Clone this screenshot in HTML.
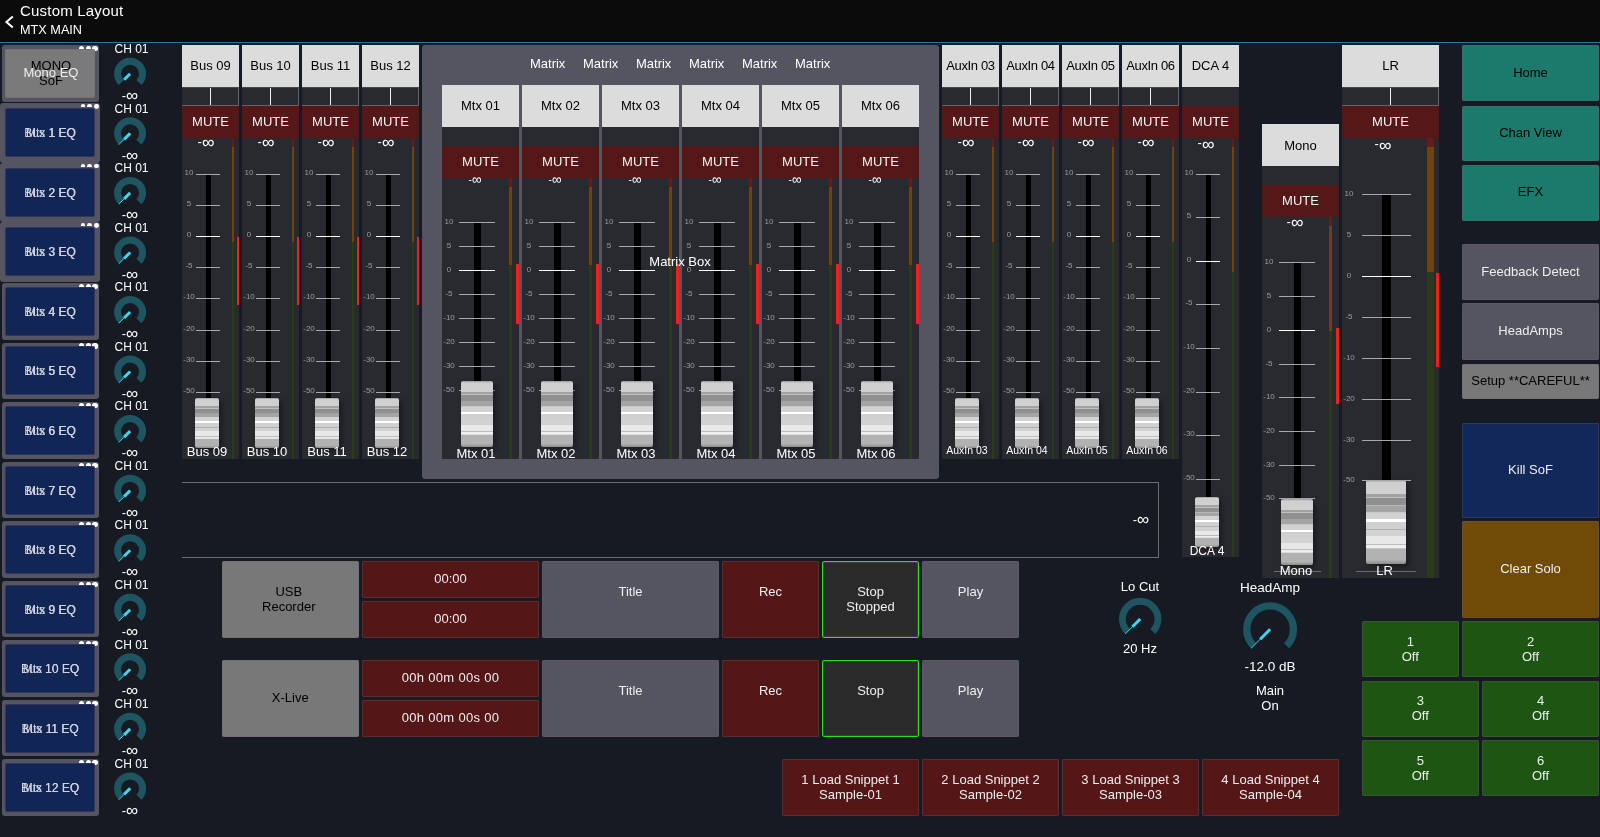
<!DOCTYPE html><html><head><meta charset="utf-8"><title>Custom Layout</title><style>
*{box-sizing:border-box;margin:0;padding:0}
html,body{width:1600px;height:837px;overflow:hidden;background:#161a23;}
body{position:relative;font-family:"Liberation Sans",sans-serif;font-size:13px;color:#fff;}
#w{position:absolute;left:0;top:0;width:1600px;height:837px;will-change:transform;}
.a{position:absolute;}
.c{position:absolute;display:flex;align-items:center;justify-content:center;text-align:center;white-space:nowrap;line-height:15px;padding-bottom:2px;}
.hdr{left:0;top:0;width:1600px;height:44px;background:#0b0b0b;}
.hl{left:0;top:41.7px;width:1600px;height:1.5px;background:#0a8494;}
.strip{background:#282a30;}
.lab{background:#dcdcdc;color:#000;}
.mute{background:#561718;color:#f2f2f2;}
.pan{border-right:1px solid #6a6262;border-bottom:1px solid #6a6262;border-top:1px solid #4a4646;}
.panl{background:#f0f0f0;width:1px;}
.tick{height:1px;background:#a8a8a8;}
.tick0{height:1.4px;background:#fff;}
.trk{background:#000;}
.sl{font-size:8px;color:#9c9c9c;text-align:center;line-height:8px;white-space:nowrap;}
.h{border-radius:2px;box-shadow:3px 3px 5px rgba(0,0,0,.35);
background:linear-gradient(to bottom,#9a9a9a 0%,#cfcfcf 3%,#d0d0d0 16.5%,#a2a2a2 16.5%,#a2a2a2 20%,#c0c0c0 20%,#c0c0c0 21.5%,#909090 21.5%,#909090 29.7%,#b8b8b8 29.7%,#b8b8b8 31%,#a4a4a4 31%,#a4a4a4 37.5%,#d2d2d2 39%,#d2d2d2 46.5%,#fff 46.5%,#fff 50.5%,#d0d0d0 50.5%,#d0d0d0 58.5%,#b0b0b0 58.5%,#b0b0b0 59.7%,#d2d2d2 59.7%,#d2d2d2 67%,#e8e8e8 67%,#e8e8e8 76.5%,#bcbcbc 76.5%,#bcbcbc 77.7%,#eee 77.7%,#eee 80.7%,#b2b2b2 82%,#b2b2b2 95%,#8c8c8c 100%);}
.m1{background:#6b1a1a;}
.m2{background:#6e4312;}
.m3{background:#2a3a1a;}
.red{background:#f0201c;}
.btn{border-radius:2px;box-shadow:inset 0 0 0 .5px rgba(120,95,115,.6);}
.gp{background:#555562;border-radius:3px;}
</style></head><body><div id="w">
<div class="a hdr" style="left:0px;top:0px;width:1600px;height:44px;"></div>
<div class="a hl" style="left:0px;top:41.7px;width:1600px;height:1.5px;"></div>
<svg class="a" style="left:4px;top:15px" width="12" height="14" viewBox="0 0 12 14"><path d="M8.8 1.6 L2.4 7 L8.8 12.4" fill="none" stroke="#fff" stroke-width="2"/></svg>
<div class="a" style="left:20px;top:2px;font-size:15px;line-height:18px;letter-spacing:.2px;white-space:nowrap">Custom Layout</div>
<div class="a" style="left:20px;top:23px;font-size:12.7px;line-height:15px;white-space:nowrap">MTX MAIN</div>
<div class="a strip" style="left:182px;top:45px;width:57px;height:414px">
<div class="c lab" style="left:0;top:0;width:57px;height:42px;font-size:13px;letter-spacing:0px;padding-bottom:2px">Bus 09</div>
<div class="a pan" style="left:0;top:42px;width:57px;height:19px"></div>
<div class="a panl" style="left:28px;top:43px;height:17px"></div>
<div class="c mute" style="left:0;top:61px;width:57px;height:32px">MUTE</div>
<div class="c" style="left:4px;top:89.3px;width:40px;height:16px;font-size:13px">-<span style="font-size:17.55px;line-height:10px;position:relative;top:1px">&#8734;</span></div>
<div class="a m1" style="left:50px;top:93px;width:2px;height:9px"></div>
<div class="a m2" style="left:50px;top:102px;width:2px;height:95px"></div>
<div class="a m3" style="left:50px;top:197px;width:2px;height:217px"></div>
<div class="a red" style="left:55px;top:192px;width:2px;height:68px"></div>
<div class="a trk" style="left:24px;top:129px;width:5px;height:226px"></div>
<div class="a tick" style="left:14px;top:129px;width:24px"></div>
<div class="a sl" style="left:-3px;top:124px;width:20px">10</div>
<div class="a tick" style="left:14px;top:160px;width:24px"></div>
<div class="a sl" style="left:-3px;top:155px;width:20px">5</div>
<div class="a tick0" style="left:14px;top:190.8px;width:24px"></div>
<div class="a sl" style="left:-3px;top:186px;width:20px">0</div>
<div class="a tick" style="left:14px;top:222px;width:24px"></div>
<div class="a sl" style="left:-3px;top:217px;width:20px">-5</div>
<div class="a tick" style="left:14px;top:253px;width:24px"></div>
<div class="a sl" style="left:-3px;top:248px;width:20px">-10</div>
<div class="a tick" style="left:14px;top:285px;width:24px"></div>
<div class="a sl" style="left:-3px;top:280px;width:20px">-20</div>
<div class="a tick" style="left:14px;top:316px;width:24px"></div>
<div class="a sl" style="left:-3px;top:311px;width:20px">-30</div>
<div class="a tick" style="left:14px;top:347px;width:24px"></div>
<div class="a sl" style="left:-3px;top:342px;width:20px">-50</div>
<div class="a h" style="left:13px;top:353px;width:24px;height:50px"></div>
<div class="c" style="left:-15px;top:399px;width:80px;height:16px;font-size:13px">Bus 09</div>
</div>
<div class="a strip" style="left:242px;top:45px;width:57px;height:414px">
<div class="c lab" style="left:0;top:0;width:57px;height:42px;font-size:13px;letter-spacing:0px;padding-bottom:2px">Bus 10</div>
<div class="a pan" style="left:0;top:42px;width:57px;height:19px"></div>
<div class="a panl" style="left:28px;top:43px;height:17px"></div>
<div class="c mute" style="left:0;top:61px;width:57px;height:32px">MUTE</div>
<div class="c" style="left:4px;top:89.3px;width:40px;height:16px;font-size:13px">-<span style="font-size:17.55px;line-height:10px;position:relative;top:1px">&#8734;</span></div>
<div class="a m1" style="left:50px;top:93px;width:2px;height:9px"></div>
<div class="a m2" style="left:50px;top:102px;width:2px;height:95px"></div>
<div class="a m3" style="left:50px;top:197px;width:2px;height:217px"></div>
<div class="a red" style="left:55px;top:192px;width:2px;height:68px"></div>
<div class="a trk" style="left:24px;top:129px;width:5px;height:226px"></div>
<div class="a tick" style="left:14px;top:129px;width:24px"></div>
<div class="a sl" style="left:-3px;top:124px;width:20px">10</div>
<div class="a tick" style="left:14px;top:160px;width:24px"></div>
<div class="a sl" style="left:-3px;top:155px;width:20px">5</div>
<div class="a tick0" style="left:14px;top:190.8px;width:24px"></div>
<div class="a sl" style="left:-3px;top:186px;width:20px">0</div>
<div class="a tick" style="left:14px;top:222px;width:24px"></div>
<div class="a sl" style="left:-3px;top:217px;width:20px">-5</div>
<div class="a tick" style="left:14px;top:253px;width:24px"></div>
<div class="a sl" style="left:-3px;top:248px;width:20px">-10</div>
<div class="a tick" style="left:14px;top:285px;width:24px"></div>
<div class="a sl" style="left:-3px;top:280px;width:20px">-20</div>
<div class="a tick" style="left:14px;top:316px;width:24px"></div>
<div class="a sl" style="left:-3px;top:311px;width:20px">-30</div>
<div class="a tick" style="left:14px;top:347px;width:24px"></div>
<div class="a sl" style="left:-3px;top:342px;width:20px">-50</div>
<div class="a h" style="left:13px;top:353px;width:24px;height:50px"></div>
<div class="c" style="left:-15px;top:399px;width:80px;height:16px;font-size:13px">Bus 10</div>
</div>
<div class="a strip" style="left:302px;top:45px;width:57px;height:414px">
<div class="c lab" style="left:0;top:0;width:57px;height:42px;font-size:13px;letter-spacing:0px;padding-bottom:2px">Bus 11</div>
<div class="a pan" style="left:0;top:42px;width:57px;height:19px"></div>
<div class="a panl" style="left:28px;top:43px;height:17px"></div>
<div class="c mute" style="left:0;top:61px;width:57px;height:32px">MUTE</div>
<div class="c" style="left:4px;top:89.3px;width:40px;height:16px;font-size:13px">-<span style="font-size:17.55px;line-height:10px;position:relative;top:1px">&#8734;</span></div>
<div class="a m1" style="left:50px;top:93px;width:2px;height:9px"></div>
<div class="a m2" style="left:50px;top:102px;width:2px;height:95px"></div>
<div class="a m3" style="left:50px;top:197px;width:2px;height:217px"></div>
<div class="a red" style="left:55px;top:192px;width:2px;height:68px"></div>
<div class="a trk" style="left:24px;top:129px;width:5px;height:226px"></div>
<div class="a tick" style="left:14px;top:129px;width:24px"></div>
<div class="a sl" style="left:-3px;top:124px;width:20px">10</div>
<div class="a tick" style="left:14px;top:160px;width:24px"></div>
<div class="a sl" style="left:-3px;top:155px;width:20px">5</div>
<div class="a tick0" style="left:14px;top:190.8px;width:24px"></div>
<div class="a sl" style="left:-3px;top:186px;width:20px">0</div>
<div class="a tick" style="left:14px;top:222px;width:24px"></div>
<div class="a sl" style="left:-3px;top:217px;width:20px">-5</div>
<div class="a tick" style="left:14px;top:253px;width:24px"></div>
<div class="a sl" style="left:-3px;top:248px;width:20px">-10</div>
<div class="a tick" style="left:14px;top:285px;width:24px"></div>
<div class="a sl" style="left:-3px;top:280px;width:20px">-20</div>
<div class="a tick" style="left:14px;top:316px;width:24px"></div>
<div class="a sl" style="left:-3px;top:311px;width:20px">-30</div>
<div class="a tick" style="left:14px;top:347px;width:24px"></div>
<div class="a sl" style="left:-3px;top:342px;width:20px">-50</div>
<div class="a h" style="left:13px;top:353px;width:24px;height:50px"></div>
<div class="c" style="left:-15px;top:399px;width:80px;height:16px;font-size:13px">Bus 11</div>
</div>
<div class="a strip" style="left:362px;top:45px;width:57px;height:414px">
<div class="c lab" style="left:0;top:0;width:57px;height:42px;font-size:13px;letter-spacing:0px;padding-bottom:2px">Bus 12</div>
<div class="a pan" style="left:0;top:42px;width:57px;height:19px"></div>
<div class="a panl" style="left:28px;top:43px;height:17px"></div>
<div class="c mute" style="left:0;top:61px;width:57px;height:32px">MUTE</div>
<div class="c" style="left:4px;top:89.3px;width:40px;height:16px;font-size:13px">-<span style="font-size:17.55px;line-height:10px;position:relative;top:1px">&#8734;</span></div>
<div class="a m1" style="left:50px;top:93px;width:2px;height:9px"></div>
<div class="a m2" style="left:50px;top:102px;width:2px;height:95px"></div>
<div class="a m3" style="left:50px;top:197px;width:2px;height:217px"></div>
<div class="a red" style="left:55px;top:192px;width:2px;height:68px"></div>
<div class="a trk" style="left:24px;top:129px;width:5px;height:226px"></div>
<div class="a tick" style="left:14px;top:129px;width:24px"></div>
<div class="a sl" style="left:-3px;top:124px;width:20px">10</div>
<div class="a tick" style="left:14px;top:160px;width:24px"></div>
<div class="a sl" style="left:-3px;top:155px;width:20px">5</div>
<div class="a tick0" style="left:14px;top:190.8px;width:24px"></div>
<div class="a sl" style="left:-3px;top:186px;width:20px">0</div>
<div class="a tick" style="left:14px;top:222px;width:24px"></div>
<div class="a sl" style="left:-3px;top:217px;width:20px">-5</div>
<div class="a tick" style="left:14px;top:253px;width:24px"></div>
<div class="a sl" style="left:-3px;top:248px;width:20px">-10</div>
<div class="a tick" style="left:14px;top:285px;width:24px"></div>
<div class="a sl" style="left:-3px;top:280px;width:20px">-20</div>
<div class="a tick" style="left:14px;top:316px;width:24px"></div>
<div class="a sl" style="left:-3px;top:311px;width:20px">-30</div>
<div class="a tick" style="left:14px;top:347px;width:24px"></div>
<div class="a sl" style="left:-3px;top:342px;width:20px">-50</div>
<div class="a h" style="left:13px;top:353px;width:24px;height:50px"></div>
<div class="c" style="left:-15px;top:399px;width:80px;height:16px;font-size:13px">Bus 12</div>
</div>
<div class="a gp" style="left:422px;top:45px;width:517px;height:434px;"></div>
<div class="c" style="left:517.7px;top:56px;width:60px;height:16px">Matrix</div>
<div class="c" style="left:570.7px;top:56px;width:60px;height:16px">Matrix</div>
<div class="c" style="left:623.7px;top:56px;width:60px;height:16px">Matrix</div>
<div class="c" style="left:676.7px;top:56px;width:60px;height:16px">Matrix</div>
<div class="c" style="left:729.7px;top:56px;width:60px;height:16px">Matrix</div>
<div class="c" style="left:782.7px;top:56px;width:60px;height:16px">Matrix</div>
<div class="a strip" style="left:442px;top:85px;width:77px;height:374px">
<div class="c lab" style="left:0;top:0;width:77px;height:42px;font-size:13px;letter-spacing:0px;padding-bottom:2px">Mtx 01</div>
<div class="c mute" style="left:0;top:61px;width:77px;height:32px">MUTE</div>
<div class="c" style="left:13px;top:87px;width:40px;height:16px;font-size:10px">-<span style="font-size:13.5px;line-height:10px;position:relative;top:1px">&#8734;</span></div>
<div class="a m1" style="left:67px;top:93px;width:3px;height:9px"></div>
<div class="a m2" style="left:67px;top:102px;width:3px;height:78px"></div>
<div class="a m3" style="left:67px;top:180px;width:3px;height:194px"></div>
<div class="a red" style="left:74px;top:179px;width:3px;height:60px"></div>
<div class="a trk" style="left:32px;top:137px;width:7px;height:161px"></div>
<div class="a tick" style="left:17px;top:137px;width:36px"></div>
<div class="a sl" style="left:-3px;top:133px;width:20px">10</div>
<div class="a tick" style="left:17px;top:161px;width:36px"></div>
<div class="a sl" style="left:-3px;top:157px;width:20px">5</div>
<div class="a tick0" style="left:17px;top:184.8px;width:36px"></div>
<div class="a sl" style="left:-3px;top:181px;width:20px">0</div>
<div class="a tick" style="left:17px;top:209px;width:36px"></div>
<div class="a sl" style="left:-3px;top:205px;width:20px">-5</div>
<div class="a tick" style="left:17px;top:233px;width:36px"></div>
<div class="a sl" style="left:-3px;top:229px;width:20px">-10</div>
<div class="a tick" style="left:17px;top:257px;width:36px"></div>
<div class="a sl" style="left:-3px;top:253px;width:20px">-20</div>
<div class="a tick" style="left:17px;top:281px;width:36px"></div>
<div class="a sl" style="left:-3px;top:277px;width:20px">-30</div>
<div class="a tick" style="left:17px;top:305px;width:36px"></div>
<div class="a sl" style="left:-3px;top:301px;width:20px">-50</div>
<div class="a h" style="left:19px;top:296px;width:32px;height:66px"></div>
<div class="c" style="left:-6px;top:361px;width:80px;height:16px;font-size:13px">Mtx 01</div>
</div>
<div class="a strip" style="left:522px;top:85px;width:77px;height:374px">
<div class="c lab" style="left:0;top:0;width:77px;height:42px;font-size:13px;letter-spacing:0px;padding-bottom:2px">Mtx 02</div>
<div class="c mute" style="left:0;top:61px;width:77px;height:32px">MUTE</div>
<div class="c" style="left:13px;top:87px;width:40px;height:16px;font-size:10px">-<span style="font-size:13.5px;line-height:10px;position:relative;top:1px">&#8734;</span></div>
<div class="a m1" style="left:67px;top:93px;width:3px;height:9px"></div>
<div class="a m2" style="left:67px;top:102px;width:3px;height:78px"></div>
<div class="a m3" style="left:67px;top:180px;width:3px;height:194px"></div>
<div class="a red" style="left:74px;top:179px;width:3px;height:60px"></div>
<div class="a trk" style="left:32px;top:137px;width:7px;height:161px"></div>
<div class="a tick" style="left:17px;top:137px;width:36px"></div>
<div class="a sl" style="left:-3px;top:133px;width:20px">10</div>
<div class="a tick" style="left:17px;top:161px;width:36px"></div>
<div class="a sl" style="left:-3px;top:157px;width:20px">5</div>
<div class="a tick0" style="left:17px;top:184.8px;width:36px"></div>
<div class="a sl" style="left:-3px;top:181px;width:20px">0</div>
<div class="a tick" style="left:17px;top:209px;width:36px"></div>
<div class="a sl" style="left:-3px;top:205px;width:20px">-5</div>
<div class="a tick" style="left:17px;top:233px;width:36px"></div>
<div class="a sl" style="left:-3px;top:229px;width:20px">-10</div>
<div class="a tick" style="left:17px;top:257px;width:36px"></div>
<div class="a sl" style="left:-3px;top:253px;width:20px">-20</div>
<div class="a tick" style="left:17px;top:281px;width:36px"></div>
<div class="a sl" style="left:-3px;top:277px;width:20px">-30</div>
<div class="a tick" style="left:17px;top:305px;width:36px"></div>
<div class="a sl" style="left:-3px;top:301px;width:20px">-50</div>
<div class="a h" style="left:19px;top:296px;width:32px;height:66px"></div>
<div class="c" style="left:-6px;top:361px;width:80px;height:16px;font-size:13px">Mtx 02</div>
</div>
<div class="a strip" style="left:602px;top:85px;width:77px;height:374px">
<div class="c lab" style="left:0;top:0;width:77px;height:42px;font-size:13px;letter-spacing:0px;padding-bottom:2px">Mtx 03</div>
<div class="c mute" style="left:0;top:61px;width:77px;height:32px">MUTE</div>
<div class="c" style="left:13px;top:87px;width:40px;height:16px;font-size:10px">-<span style="font-size:13.5px;line-height:10px;position:relative;top:1px">&#8734;</span></div>
<div class="a m1" style="left:67px;top:93px;width:3px;height:9px"></div>
<div class="a m2" style="left:67px;top:102px;width:3px;height:78px"></div>
<div class="a m3" style="left:67px;top:180px;width:3px;height:194px"></div>
<div class="a red" style="left:74px;top:179px;width:3px;height:60px"></div>
<div class="a trk" style="left:32px;top:137px;width:7px;height:161px"></div>
<div class="a tick" style="left:17px;top:137px;width:36px"></div>
<div class="a sl" style="left:-3px;top:133px;width:20px">10</div>
<div class="a tick" style="left:17px;top:161px;width:36px"></div>
<div class="a sl" style="left:-3px;top:157px;width:20px">5</div>
<div class="a tick0" style="left:17px;top:184.8px;width:36px"></div>
<div class="a sl" style="left:-3px;top:181px;width:20px">0</div>
<div class="a tick" style="left:17px;top:209px;width:36px"></div>
<div class="a sl" style="left:-3px;top:205px;width:20px">-5</div>
<div class="a tick" style="left:17px;top:233px;width:36px"></div>
<div class="a sl" style="left:-3px;top:229px;width:20px">-10</div>
<div class="a tick" style="left:17px;top:257px;width:36px"></div>
<div class="a sl" style="left:-3px;top:253px;width:20px">-20</div>
<div class="a tick" style="left:17px;top:281px;width:36px"></div>
<div class="a sl" style="left:-3px;top:277px;width:20px">-30</div>
<div class="a tick" style="left:17px;top:305px;width:36px"></div>
<div class="a sl" style="left:-3px;top:301px;width:20px">-50</div>
<div class="a h" style="left:19px;top:296px;width:32px;height:66px"></div>
<div class="c" style="left:-6px;top:361px;width:80px;height:16px;font-size:13px">Mtx 03</div>
</div>
<div class="a strip" style="left:682px;top:85px;width:77px;height:374px">
<div class="c lab" style="left:0;top:0;width:77px;height:42px;font-size:13px;letter-spacing:0px;padding-bottom:2px">Mtx 04</div>
<div class="c mute" style="left:0;top:61px;width:77px;height:32px">MUTE</div>
<div class="c" style="left:13px;top:87px;width:40px;height:16px;font-size:10px">-<span style="font-size:13.5px;line-height:10px;position:relative;top:1px">&#8734;</span></div>
<div class="a m1" style="left:67px;top:93px;width:3px;height:9px"></div>
<div class="a m2" style="left:67px;top:102px;width:3px;height:78px"></div>
<div class="a m3" style="left:67px;top:180px;width:3px;height:194px"></div>
<div class="a red" style="left:74px;top:179px;width:3px;height:60px"></div>
<div class="a trk" style="left:32px;top:137px;width:7px;height:161px"></div>
<div class="a tick" style="left:17px;top:137px;width:36px"></div>
<div class="a sl" style="left:-3px;top:133px;width:20px">10</div>
<div class="a tick" style="left:17px;top:161px;width:36px"></div>
<div class="a sl" style="left:-3px;top:157px;width:20px">5</div>
<div class="a tick0" style="left:17px;top:184.8px;width:36px"></div>
<div class="a sl" style="left:-3px;top:181px;width:20px">0</div>
<div class="a tick" style="left:17px;top:209px;width:36px"></div>
<div class="a sl" style="left:-3px;top:205px;width:20px">-5</div>
<div class="a tick" style="left:17px;top:233px;width:36px"></div>
<div class="a sl" style="left:-3px;top:229px;width:20px">-10</div>
<div class="a tick" style="left:17px;top:257px;width:36px"></div>
<div class="a sl" style="left:-3px;top:253px;width:20px">-20</div>
<div class="a tick" style="left:17px;top:281px;width:36px"></div>
<div class="a sl" style="left:-3px;top:277px;width:20px">-30</div>
<div class="a tick" style="left:17px;top:305px;width:36px"></div>
<div class="a sl" style="left:-3px;top:301px;width:20px">-50</div>
<div class="a h" style="left:19px;top:296px;width:32px;height:66px"></div>
<div class="c" style="left:-6px;top:361px;width:80px;height:16px;font-size:13px">Mtx 04</div>
</div>
<div class="a strip" style="left:762px;top:85px;width:77px;height:374px">
<div class="c lab" style="left:0;top:0;width:77px;height:42px;font-size:13px;letter-spacing:0px;padding-bottom:2px">Mtx 05</div>
<div class="c mute" style="left:0;top:61px;width:77px;height:32px">MUTE</div>
<div class="c" style="left:13px;top:87px;width:40px;height:16px;font-size:10px">-<span style="font-size:13.5px;line-height:10px;position:relative;top:1px">&#8734;</span></div>
<div class="a m1" style="left:67px;top:93px;width:3px;height:9px"></div>
<div class="a m2" style="left:67px;top:102px;width:3px;height:78px"></div>
<div class="a m3" style="left:67px;top:180px;width:3px;height:194px"></div>
<div class="a red" style="left:74px;top:179px;width:3px;height:60px"></div>
<div class="a trk" style="left:32px;top:137px;width:7px;height:161px"></div>
<div class="a tick" style="left:17px;top:137px;width:36px"></div>
<div class="a sl" style="left:-3px;top:133px;width:20px">10</div>
<div class="a tick" style="left:17px;top:161px;width:36px"></div>
<div class="a sl" style="left:-3px;top:157px;width:20px">5</div>
<div class="a tick0" style="left:17px;top:184.8px;width:36px"></div>
<div class="a sl" style="left:-3px;top:181px;width:20px">0</div>
<div class="a tick" style="left:17px;top:209px;width:36px"></div>
<div class="a sl" style="left:-3px;top:205px;width:20px">-5</div>
<div class="a tick" style="left:17px;top:233px;width:36px"></div>
<div class="a sl" style="left:-3px;top:229px;width:20px">-10</div>
<div class="a tick" style="left:17px;top:257px;width:36px"></div>
<div class="a sl" style="left:-3px;top:253px;width:20px">-20</div>
<div class="a tick" style="left:17px;top:281px;width:36px"></div>
<div class="a sl" style="left:-3px;top:277px;width:20px">-30</div>
<div class="a tick" style="left:17px;top:305px;width:36px"></div>
<div class="a sl" style="left:-3px;top:301px;width:20px">-50</div>
<div class="a h" style="left:19px;top:296px;width:32px;height:66px"></div>
<div class="c" style="left:-6px;top:361px;width:80px;height:16px;font-size:13px">Mtx 05</div>
</div>
<div class="a strip" style="left:842px;top:85px;width:77px;height:374px">
<div class="c lab" style="left:0;top:0;width:77px;height:42px;font-size:13px;letter-spacing:0px;padding-bottom:2px">Mtx 06</div>
<div class="c mute" style="left:0;top:61px;width:77px;height:32px">MUTE</div>
<div class="c" style="left:13px;top:87px;width:40px;height:16px;font-size:10px">-<span style="font-size:13.5px;line-height:10px;position:relative;top:1px">&#8734;</span></div>
<div class="a m1" style="left:67px;top:93px;width:3px;height:9px"></div>
<div class="a m2" style="left:67px;top:102px;width:3px;height:78px"></div>
<div class="a m3" style="left:67px;top:180px;width:3px;height:194px"></div>
<div class="a red" style="left:74px;top:179px;width:3px;height:60px"></div>
<div class="a trk" style="left:32px;top:137px;width:7px;height:161px"></div>
<div class="a tick" style="left:17px;top:137px;width:36px"></div>
<div class="a sl" style="left:-3px;top:133px;width:20px">10</div>
<div class="a tick" style="left:17px;top:161px;width:36px"></div>
<div class="a sl" style="left:-3px;top:157px;width:20px">5</div>
<div class="a tick0" style="left:17px;top:184.8px;width:36px"></div>
<div class="a sl" style="left:-3px;top:181px;width:20px">0</div>
<div class="a tick" style="left:17px;top:209px;width:36px"></div>
<div class="a sl" style="left:-3px;top:205px;width:20px">-5</div>
<div class="a tick" style="left:17px;top:233px;width:36px"></div>
<div class="a sl" style="left:-3px;top:229px;width:20px">-10</div>
<div class="a tick" style="left:17px;top:257px;width:36px"></div>
<div class="a sl" style="left:-3px;top:253px;width:20px">-20</div>
<div class="a tick" style="left:17px;top:281px;width:36px"></div>
<div class="a sl" style="left:-3px;top:277px;width:20px">-30</div>
<div class="a tick" style="left:17px;top:305px;width:36px"></div>
<div class="a sl" style="left:-3px;top:301px;width:20px">-50</div>
<div class="a h" style="left:19px;top:296px;width:32px;height:66px"></div>
<div class="c" style="left:-6px;top:361px;width:80px;height:16px;font-size:13px">Mtx 06</div>
</div>
<div class="c" style="left:640px;top:254px;width:80px;height:16px">Matrix Box</div>
<div class="a strip" style="left:942px;top:45px;width:57px;height:414px">
<div class="c lab" style="left:0;top:0;width:57px;height:42px;font-size:13px;letter-spacing:-0.35px;padding-bottom:2px">AuxIn 03</div>
<div class="a pan" style="left:0;top:42px;width:57px;height:19px"></div>
<div class="a panl" style="left:28px;top:43px;height:17px"></div>
<div class="c mute" style="left:0;top:61px;width:57px;height:32px">MUTE</div>
<div class="c" style="left:4px;top:89.3px;width:40px;height:16px;font-size:13px">-<span style="font-size:17.55px;line-height:10px;position:relative;top:1px">&#8734;</span></div>
<div class="a m1" style="left:50px;top:93px;width:2px;height:9px"></div>
<div class="a m2" style="left:50px;top:102px;width:2px;height:95px"></div>
<div class="a m3" style="left:50px;top:197px;width:2px;height:217px"></div>
<div class="a trk" style="left:24px;top:129px;width:5px;height:226px"></div>
<div class="a tick" style="left:14px;top:129px;width:24px"></div>
<div class="a sl" style="left:-3px;top:124px;width:20px">10</div>
<div class="a tick" style="left:14px;top:160px;width:24px"></div>
<div class="a sl" style="left:-3px;top:155px;width:20px">5</div>
<div class="a tick0" style="left:14px;top:190.8px;width:24px"></div>
<div class="a sl" style="left:-3px;top:186px;width:20px">0</div>
<div class="a tick" style="left:14px;top:222px;width:24px"></div>
<div class="a sl" style="left:-3px;top:217px;width:20px">-5</div>
<div class="a tick" style="left:14px;top:253px;width:24px"></div>
<div class="a sl" style="left:-3px;top:248px;width:20px">-10</div>
<div class="a tick" style="left:14px;top:285px;width:24px"></div>
<div class="a sl" style="left:-3px;top:280px;width:20px">-20</div>
<div class="a tick" style="left:14px;top:316px;width:24px"></div>
<div class="a sl" style="left:-3px;top:311px;width:20px">-30</div>
<div class="a tick" style="left:14px;top:347px;width:24px"></div>
<div class="a sl" style="left:-3px;top:342px;width:20px">-50</div>
<div class="a h" style="left:13px;top:353px;width:24px;height:50px"></div>
<div class="c" style="left:-15px;top:398px;width:80px;height:16px;font-size:10.5px">AuxIn 03</div>
</div>
<div class="a strip" style="left:1002px;top:45px;width:57px;height:414px">
<div class="c lab" style="left:0;top:0;width:57px;height:42px;font-size:13px;letter-spacing:-0.35px;padding-bottom:2px">AuxIn 04</div>
<div class="a pan" style="left:0;top:42px;width:57px;height:19px"></div>
<div class="a panl" style="left:28px;top:43px;height:17px"></div>
<div class="c mute" style="left:0;top:61px;width:57px;height:32px">MUTE</div>
<div class="c" style="left:4px;top:89.3px;width:40px;height:16px;font-size:13px">-<span style="font-size:17.55px;line-height:10px;position:relative;top:1px">&#8734;</span></div>
<div class="a m1" style="left:50px;top:93px;width:2px;height:9px"></div>
<div class="a m2" style="left:50px;top:102px;width:2px;height:95px"></div>
<div class="a m3" style="left:50px;top:197px;width:2px;height:217px"></div>
<div class="a trk" style="left:24px;top:129px;width:5px;height:226px"></div>
<div class="a tick" style="left:14px;top:129px;width:24px"></div>
<div class="a sl" style="left:-3px;top:124px;width:20px">10</div>
<div class="a tick" style="left:14px;top:160px;width:24px"></div>
<div class="a sl" style="left:-3px;top:155px;width:20px">5</div>
<div class="a tick0" style="left:14px;top:190.8px;width:24px"></div>
<div class="a sl" style="left:-3px;top:186px;width:20px">0</div>
<div class="a tick" style="left:14px;top:222px;width:24px"></div>
<div class="a sl" style="left:-3px;top:217px;width:20px">-5</div>
<div class="a tick" style="left:14px;top:253px;width:24px"></div>
<div class="a sl" style="left:-3px;top:248px;width:20px">-10</div>
<div class="a tick" style="left:14px;top:285px;width:24px"></div>
<div class="a sl" style="left:-3px;top:280px;width:20px">-20</div>
<div class="a tick" style="left:14px;top:316px;width:24px"></div>
<div class="a sl" style="left:-3px;top:311px;width:20px">-30</div>
<div class="a tick" style="left:14px;top:347px;width:24px"></div>
<div class="a sl" style="left:-3px;top:342px;width:20px">-50</div>
<div class="a h" style="left:13px;top:353px;width:24px;height:50px"></div>
<div class="c" style="left:-15px;top:398px;width:80px;height:16px;font-size:10.5px">AuxIn 04</div>
</div>
<div class="a strip" style="left:1062px;top:45px;width:57px;height:414px">
<div class="c lab" style="left:0;top:0;width:57px;height:42px;font-size:13px;letter-spacing:-0.35px;padding-bottom:2px">AuxIn 05</div>
<div class="a pan" style="left:0;top:42px;width:57px;height:19px"></div>
<div class="a panl" style="left:28px;top:43px;height:17px"></div>
<div class="c mute" style="left:0;top:61px;width:57px;height:32px">MUTE</div>
<div class="c" style="left:4px;top:89.3px;width:40px;height:16px;font-size:13px">-<span style="font-size:17.55px;line-height:10px;position:relative;top:1px">&#8734;</span></div>
<div class="a m1" style="left:50px;top:93px;width:2px;height:9px"></div>
<div class="a m2" style="left:50px;top:102px;width:2px;height:95px"></div>
<div class="a m3" style="left:50px;top:197px;width:2px;height:217px"></div>
<div class="a trk" style="left:24px;top:129px;width:5px;height:226px"></div>
<div class="a tick" style="left:14px;top:129px;width:24px"></div>
<div class="a sl" style="left:-3px;top:124px;width:20px">10</div>
<div class="a tick" style="left:14px;top:160px;width:24px"></div>
<div class="a sl" style="left:-3px;top:155px;width:20px">5</div>
<div class="a tick0" style="left:14px;top:190.8px;width:24px"></div>
<div class="a sl" style="left:-3px;top:186px;width:20px">0</div>
<div class="a tick" style="left:14px;top:222px;width:24px"></div>
<div class="a sl" style="left:-3px;top:217px;width:20px">-5</div>
<div class="a tick" style="left:14px;top:253px;width:24px"></div>
<div class="a sl" style="left:-3px;top:248px;width:20px">-10</div>
<div class="a tick" style="left:14px;top:285px;width:24px"></div>
<div class="a sl" style="left:-3px;top:280px;width:20px">-20</div>
<div class="a tick" style="left:14px;top:316px;width:24px"></div>
<div class="a sl" style="left:-3px;top:311px;width:20px">-30</div>
<div class="a tick" style="left:14px;top:347px;width:24px"></div>
<div class="a sl" style="left:-3px;top:342px;width:20px">-50</div>
<div class="a h" style="left:13px;top:353px;width:24px;height:50px"></div>
<div class="c" style="left:-15px;top:398px;width:80px;height:16px;font-size:10.5px">AuxIn 05</div>
</div>
<div class="a strip" style="left:1122px;top:45px;width:57px;height:414px">
<div class="c lab" style="left:0;top:0;width:57px;height:42px;font-size:13px;letter-spacing:-0.35px;padding-bottom:2px">AuxIn 06</div>
<div class="a pan" style="left:0;top:42px;width:57px;height:19px"></div>
<div class="a panl" style="left:28px;top:43px;height:17px"></div>
<div class="c mute" style="left:0;top:61px;width:57px;height:32px">MUTE</div>
<div class="c" style="left:4px;top:89.3px;width:40px;height:16px;font-size:13px">-<span style="font-size:17.55px;line-height:10px;position:relative;top:1px">&#8734;</span></div>
<div class="a m1" style="left:50px;top:93px;width:2px;height:9px"></div>
<div class="a m2" style="left:50px;top:102px;width:2px;height:95px"></div>
<div class="a m3" style="left:50px;top:197px;width:2px;height:217px"></div>
<div class="a trk" style="left:24px;top:129px;width:5px;height:226px"></div>
<div class="a tick" style="left:14px;top:129px;width:24px"></div>
<div class="a sl" style="left:-3px;top:124px;width:20px">10</div>
<div class="a tick" style="left:14px;top:160px;width:24px"></div>
<div class="a sl" style="left:-3px;top:155px;width:20px">5</div>
<div class="a tick0" style="left:14px;top:190.8px;width:24px"></div>
<div class="a sl" style="left:-3px;top:186px;width:20px">0</div>
<div class="a tick" style="left:14px;top:222px;width:24px"></div>
<div class="a sl" style="left:-3px;top:217px;width:20px">-5</div>
<div class="a tick" style="left:14px;top:253px;width:24px"></div>
<div class="a sl" style="left:-3px;top:248px;width:20px">-10</div>
<div class="a tick" style="left:14px;top:285px;width:24px"></div>
<div class="a sl" style="left:-3px;top:280px;width:20px">-20</div>
<div class="a tick" style="left:14px;top:316px;width:24px"></div>
<div class="a sl" style="left:-3px;top:311px;width:20px">-30</div>
<div class="a tick" style="left:14px;top:347px;width:24px"></div>
<div class="a sl" style="left:-3px;top:342px;width:20px">-50</div>
<div class="a h" style="left:13px;top:353px;width:24px;height:50px"></div>
<div class="c" style="left:-15px;top:398px;width:80px;height:16px;font-size:10.5px">AuxIn 06</div>
</div>
<div class="a strip" style="left:1182px;top:45px;width:57px;height:512px">
<div class="c lab" style="left:0;top:0;width:57px;height:42px;font-size:13px;letter-spacing:0px;padding-bottom:2px">DCA 4</div>
<div class="c mute" style="left:0;top:61px;width:57px;height:32px">MUTE</div>
<div class="c" style="left:4px;top:90.5px;width:40px;height:16px;font-size:13px">-<span style="font-size:17.55px;line-height:10px;position:relative;top:1px">&#8734;</span></div>
<div class="a m1" style="left:50px;top:93px;width:2px;height:9px"></div>
<div class="a m2" style="left:50px;top:102px;width:2px;height:125px"></div>
<div class="a m3" style="left:50px;top:227px;width:2px;height:285px"></div>
<div class="a trk" style="left:24px;top:129px;width:5px;height:325px"></div>
<div class="a tick" style="left:14px;top:129px;width:24px"></div>
<div class="a sl" style="left:-3px;top:124px;width:20px">10</div>
<div class="a tick" style="left:14px;top:172px;width:24px"></div>
<div class="a sl" style="left:-3px;top:167px;width:20px">5</div>
<div class="a tick0" style="left:14px;top:215.8px;width:24px"></div>
<div class="a sl" style="left:-3px;top:211px;width:20px">0</div>
<div class="a tick" style="left:14px;top:259px;width:24px"></div>
<div class="a sl" style="left:-3px;top:254px;width:20px">-5</div>
<div class="a tick" style="left:14px;top:303px;width:24px"></div>
<div class="a sl" style="left:-3px;top:298px;width:20px">-10</div>
<div class="a tick" style="left:14px;top:347px;width:24px"></div>
<div class="a sl" style="left:-3px;top:342px;width:20px">-20</div>
<div class="a tick" style="left:14px;top:390px;width:24px"></div>
<div class="a sl" style="left:-3px;top:385px;width:20px">-30</div>
<div class="a tick" style="left:14px;top:434px;width:24px"></div>
<div class="a sl" style="left:-3px;top:429px;width:20px">-50</div>
<div class="a h" style="left:13px;top:452px;width:24px;height:50px"></div>
<div class="c" style="left:-15px;top:499px;width:80px;height:16px;font-size:12px">DCA 4</div>
</div>
<div class="a strip" style="left:1262px;top:124px;width:77px;height:453.5px">
<div class="c lab" style="left:0;top:0;width:77px;height:42px;font-size:13px;letter-spacing:0px;padding-bottom:0px">Mono</div>
<div class="c mute" style="left:0;top:61px;width:77px;height:32px">MUTE</div>
<div class="c" style="left:13px;top:90.3px;width:40px;height:16px;font-size:13px">-<span style="font-size:17.55px;line-height:10px;position:relative;top:1px">&#8734;</span></div>
<div class="a m1" style="left:67px;top:93px;width:3px;height:9px"></div>
<div class="a m2" style="left:67px;top:102px;width:3px;height:104.5px"></div>
<div class="a m3" style="left:67px;top:206.5px;width:3px;height:247px"></div>
<div class="a red" style="left:74px;top:204px;width:3px;height:76px"></div>
<div class="a trk" style="left:32px;top:139px;width:7px;height:238px"></div>
<div class="a tick" style="left:17px;top:138px;width:36px"></div>
<div class="a sl" style="left:-3px;top:134px;width:20px">10</div>
<div class="a tick" style="left:17px;top:172px;width:36px"></div>
<div class="a sl" style="left:-3px;top:168px;width:20px">5</div>
<div class="a tick0" style="left:17px;top:205.8px;width:36px"></div>
<div class="a sl" style="left:-3px;top:202px;width:20px">0</div>
<div class="a tick" style="left:17px;top:240px;width:36px"></div>
<div class="a sl" style="left:-3px;top:236px;width:20px">-5</div>
<div class="a tick" style="left:17px;top:273px;width:36px"></div>
<div class="a sl" style="left:-3px;top:269px;width:20px">-10</div>
<div class="a tick" style="left:17px;top:307px;width:36px"></div>
<div class="a sl" style="left:-3px;top:303px;width:20px">-20</div>
<div class="a tick" style="left:17px;top:341px;width:36px"></div>
<div class="a sl" style="left:-3px;top:337px;width:20px">-30</div>
<div class="a tick" style="left:17px;top:374px;width:36px"></div>
<div class="a sl" style="left:-3px;top:370px;width:20px">-50</div>
<div class="a h" style="left:19px;top:375px;width:32px;height:66px"></div>
<div class="a" style="left:11.5px;top:447px;width:47px;height:1px;background:#6a6a6e"></div>
<div class="c" style="left:-6px;top:439px;width:80px;height:16px;font-size:13px">Mono</div>
</div>
<div class="a strip" style="left:1342px;top:45px;width:97px;height:532.5px">
<div class="c lab" style="left:0;top:0;width:97px;height:42px;font-size:13px;letter-spacing:0px;padding-bottom:2px">LR</div>
<div class="a pan" style="left:0;top:42px;width:97px;height:19px"></div>
<div class="a panl" style="left:48px;top:43px;height:17px"></div>
<div class="c mute" style="left:0;top:61px;width:97px;height:32px">MUTE</div>
<div class="c" style="left:21px;top:91.5px;width:40px;height:16px;font-size:13px">-<span style="font-size:17.55px;line-height:10px;position:relative;top:1px">&#8734;</span></div>
<div class="a m1" style="left:85px;top:93px;width:7px;height:9px"></div>
<div class="a m2" style="left:85px;top:102px;width:7px;height:125px"></div>
<div class="a m3" style="left:85px;top:227px;width:7px;height:305.5px"></div>
<div class="a red" style="left:93.5px;top:228px;width:3.5px;height:94px"></div>
<div class="a trk" style="left:40px;top:149px;width:9px;height:288px"></div>
<div class="a tick" style="left:20px;top:149px;width:49px"></div>
<div class="a sl" style="left:-3px;top:145px;width:20px">10</div>
<div class="a tick" style="left:20px;top:190px;width:49px"></div>
<div class="a sl" style="left:-3px;top:186px;width:20px">5</div>
<div class="a tick0" style="left:20px;top:230.8px;width:49px"></div>
<div class="a sl" style="left:-3px;top:227px;width:20px">0</div>
<div class="a tick" style="left:20px;top:272px;width:49px"></div>
<div class="a sl" style="left:-3px;top:268px;width:20px">-5</div>
<div class="a tick" style="left:20px;top:313px;width:49px"></div>
<div class="a sl" style="left:-3px;top:309px;width:20px">-10</div>
<div class="a tick" style="left:20px;top:354px;width:49px"></div>
<div class="a sl" style="left:-3px;top:350px;width:20px">-20</div>
<div class="a tick" style="left:20px;top:395px;width:49px"></div>
<div class="a sl" style="left:-3px;top:391px;width:20px">-30</div>
<div class="a tick" style="left:20px;top:435px;width:49px"></div>
<div class="a sl" style="left:-3px;top:431px;width:20px">-50</div>
<div class="a h" style="left:24px;top:435px;width:40px;height:84px"></div>
<div class="a" style="left:14px;top:526px;width:60px;height:1px;background:#6a6a6e"></div>
<div class="c" style="left:2.5px;top:518px;width:80px;height:16px;font-size:13px">LR</div>
</div>
<div class="a" style="left:182px;top:482px;width:977px;height:76px;border:1px solid #75686a;border-left:none;"></div>
<div class="c" style="left:1121px;top:512px;width:40px;height:16px;font-size:13px">-<span style="font-size:17px;line-height:10px;position:relative;top:1px">&#8734;</span></div>
<div class="c btn" style="left:222px;top:561px;width:136.5px;height:76.6px;background:#787878;color:#000;padding-bottom:0;padding-right:3px;">USB<br>Recorder</div>
<div class="c btn" style="left:362px;top:561px;width:177px;height:36.5px;background:#541617;color:#eee;">00:00</div>
<div class="c btn" style="left:362px;top:601px;width:177px;height:36.6px;background:#541617;color:#eee;">00:00</div>
<div class="c btn" style="left:542px;top:561px;width:177px;height:76.6px;background:#555562;color:#eee;padding-bottom:16px;">Title</div>
<div class="c btn" style="left:722px;top:561px;width:97px;height:76.6px;background:#541617;color:#eee;padding-bottom:16px;">Rec</div>
<div class="c btn" style="left:822px;top:561px;width:97px;height:76.6px;background:#2a2a2b;color:#eee;padding-bottom:0;border:1px solid #22e022;">Stop<br>Stopped</div>
<div class="c btn" style="left:922px;top:561px;width:97px;height:76.6px;background:#555562;color:#eee;padding-bottom:16px;">Play</div>
<div class="c btn" style="left:222px;top:660px;width:136.5px;height:76.6px;background:#787878;color:#000;">X-Live</div>
<div class="c btn" style="left:362px;top:660px;width:177px;height:36.5px;background:#541617;color:#eee;letter-spacing:.3px;">00h 00m 00s 00</div>
<div class="c btn" style="left:362px;top:700px;width:177px;height:36.6px;background:#541617;color:#eee;letter-spacing:.3px;">00h 00m 00s 00</div>
<div class="c btn" style="left:542px;top:660px;width:177px;height:76.6px;background:#555562;color:#eee;padding-bottom:16px;">Title</div>
<div class="c btn" style="left:722px;top:660px;width:97px;height:76.6px;background:#541617;color:#eee;padding-bottom:16px;">Rec</div>
<div class="c btn" style="left:822px;top:660px;width:97px;height:76.6px;background:#2a2a2b;color:#eee;border:1px solid #22e022;padding-bottom:16px;">Stop</div>
<div class="c btn" style="left:922px;top:660px;width:97px;height:76.6px;background:#555562;color:#eee;padding-bottom:16px;">Play</div>
<div class="c btn" style="left:782px;top:759px;width:137px;height:56.5px;background:#541617;color:#eee;padding-bottom:0;">1 Load Snippet 1<br>Sample-01</div>
<div class="c btn" style="left:922px;top:759px;width:137px;height:56.5px;background:#541617;color:#eee;padding-bottom:0;">2 Load Snippet 2<br>Sample-02</div>
<div class="c btn" style="left:1062px;top:759px;width:137px;height:56.5px;background:#541617;color:#eee;padding-bottom:0;">3 Load Snippet 3<br>Sample-03</div>
<div class="c btn" style="left:1202px;top:759px;width:137px;height:56.5px;background:#541617;color:#eee;padding-bottom:0;">4 Load Snippet 4<br>Sample-04</div>
<div class="c btn" style="left:1462px;top:45px;width:137px;height:56.3px;background:#1b7a6c;color:#000;">Home</div>
<div class="c btn" style="left:1462px;top:105.7px;width:137px;height:55px;background:#1b7a6c;color:#000;">Chan View</div>
<div class="c btn" style="left:1462px;top:164.5px;width:137px;height:56px;background:#1b7a6c;color:#000;">EFX</div>
<div class="c btn" style="left:1462px;top:244px;width:137px;height:56px;background:#555562;color:#eee;">Feedback Detect</div>
<div class="c btn" style="left:1462px;top:303px;width:137px;height:56.5px;background:#555562;color:#eee;">HeadAmps</div>
<div class="c btn" style="left:1462px;top:363.5px;width:137px;height:35.5px;background:#787878;color:#000;">Setup **CAREFUL**</div>
<div class="c btn" style="left:1462px;top:422.5px;width:137px;height:95.5px;background:#12275a;color:#eee;">Kill SoF</div>
<div class="c btn" style="left:1462px;top:521px;width:137px;height:96.7px;background:#704a07;color:#eee;">Clear Solo</div>
<div class="c btn" style="left:1362px;top:621px;width:96.5px;height:56px;background:#1c5612;color:#eee;padding-bottom:0;">1<br>Off</div>
<div class="c btn" style="left:1462px;top:621px;width:137px;height:56px;background:#1c5612;color:#eee;padding-bottom:0;">2<br>Off</div>
<div class="c btn" style="left:1362px;top:680.5px;width:116.5px;height:56px;background:#1c5612;color:#eee;padding-bottom:0;padding-bottom:2px;">3<br>Off</div>
<div class="c btn" style="left:1482px;top:680.5px;width:117px;height:56px;background:#1c5612;color:#eee;padding-bottom:0;padding-bottom:2px;">4<br>Off</div>
<div class="c btn" style="left:1362px;top:740px;width:116.5px;height:55.5px;background:#1c5612;color:#eee;padding-bottom:0;">5<br>Off</div>
<div class="c btn" style="left:1482px;top:740px;width:117px;height:55.5px;background:#1c5612;color:#eee;padding-bottom:0;">6<br>Off</div>
<svg class="a" style="left:0;top:0" width="1600" height="837" viewBox="0 0 1600 837"><path d="M121.26 82.64 A12.5 12.5 0 1 1 138.94 82.64" fill="none" stroke="#1e5560" stroke-width="7"/><path d="M130.10 73.80 L124.09 79.81" stroke="#3fd6f2" stroke-width="3"/><path d="M121.26 142.19 A12.5 12.5 0 1 1 138.94 142.19" fill="none" stroke="#1e5560" stroke-width="7"/><path d="M130.10 133.35 L118.79 144.66" stroke="#3fd6f2" stroke-width="1"/><path d="M130.10 133.35 L124.09 139.36" stroke="#3fd6f2" stroke-width="3"/><path d="M121.26 201.74 A12.5 12.5 0 1 1 138.94 201.74" fill="none" stroke="#1e5560" stroke-width="7"/><path d="M130.10 192.90 L118.79 204.21" stroke="#3fd6f2" stroke-width="1"/><path d="M130.10 192.90 L124.09 198.91" stroke="#3fd6f2" stroke-width="3"/><path d="M121.26 261.29 A12.5 12.5 0 1 1 138.94 261.29" fill="none" stroke="#1e5560" stroke-width="7"/><path d="M130.10 252.45 L118.79 263.76" stroke="#3fd6f2" stroke-width="1"/><path d="M130.10 252.45 L124.09 258.46" stroke="#3fd6f2" stroke-width="3"/><path d="M121.26 320.84 A12.5 12.5 0 1 1 138.94 320.84" fill="none" stroke="#1e5560" stroke-width="7"/><path d="M130.10 312.00 L118.79 323.31" stroke="#3fd6f2" stroke-width="1"/><path d="M130.10 312.00 L124.09 318.01" stroke="#3fd6f2" stroke-width="3"/><path d="M121.26 380.39 A12.5 12.5 0 1 1 138.94 380.39" fill="none" stroke="#1e5560" stroke-width="7"/><path d="M130.10 371.55 L118.79 382.86" stroke="#3fd6f2" stroke-width="1"/><path d="M130.10 371.55 L124.09 377.56" stroke="#3fd6f2" stroke-width="3"/><path d="M121.26 439.94 A12.5 12.5 0 1 1 138.94 439.94" fill="none" stroke="#1e5560" stroke-width="7"/><path d="M130.10 431.10 L118.79 442.41" stroke="#3fd6f2" stroke-width="1"/><path d="M130.10 431.10 L124.09 437.11" stroke="#3fd6f2" stroke-width="3"/><path d="M121.26 499.49 A12.5 12.5 0 1 1 138.94 499.49" fill="none" stroke="#1e5560" stroke-width="7"/><path d="M130.10 490.65 L118.79 501.96" stroke="#3fd6f2" stroke-width="1"/><path d="M130.10 490.65 L124.09 496.66" stroke="#3fd6f2" stroke-width="3"/><path d="M121.26 559.04 A12.5 12.5 0 1 1 138.94 559.04" fill="none" stroke="#1e5560" stroke-width="7"/><path d="M130.10 550.20 L118.79 561.51" stroke="#3fd6f2" stroke-width="1"/><path d="M130.10 550.20 L124.09 556.21" stroke="#3fd6f2" stroke-width="3"/><path d="M121.26 618.59 A12.5 12.5 0 1 1 138.94 618.59" fill="none" stroke="#1e5560" stroke-width="7"/><path d="M130.10 609.75 L118.79 621.06" stroke="#3fd6f2" stroke-width="1"/><path d="M130.10 609.75 L124.09 615.76" stroke="#3fd6f2" stroke-width="3"/><path d="M121.26 678.14 A12.5 12.5 0 1 1 138.94 678.14" fill="none" stroke="#1e5560" stroke-width="7"/><path d="M130.10 669.30 L118.79 680.61" stroke="#3fd6f2" stroke-width="1"/><path d="M130.10 669.30 L124.09 675.31" stroke="#3fd6f2" stroke-width="3"/><path d="M121.26 737.69 A12.5 12.5 0 1 1 138.94 737.69" fill="none" stroke="#1e5560" stroke-width="7"/><path d="M130.10 728.85 L118.79 740.16" stroke="#3fd6f2" stroke-width="1"/><path d="M130.10 728.85 L124.09 734.86" stroke="#3fd6f2" stroke-width="3"/><path d="M121.26 797.24 A12.5 12.5 0 1 1 138.94 797.24" fill="none" stroke="#1e5560" stroke-width="7"/><path d="M130.10 788.40 L118.79 799.71" stroke="#3fd6f2" stroke-width="1"/><path d="M130.10 788.40 L124.09 794.41" stroke="#3fd6f2" stroke-width="3"/><path d="M1127.65 631.55 A17.75 17.75 0 1 1 1152.75 631.55" fill="none" stroke="#1e5560" stroke-width="6.9"/><path d="M1140.20 619.00 L1125.21 633.99" stroke="#3fd6f2" stroke-width="1"/><path d="M1140.20 619.00 L1132.42 626.78" stroke="#3fd6f2" stroke-width="3"/><path d="M1253.59 645.81 A23.35 23.35 0 1 1 1286.61 645.81" fill="none" stroke="#1e5560" stroke-width="7.3"/><path d="M1270.10 629.30 L1251.01 648.39" stroke="#3fd6f2" stroke-width="1"/><path d="M1270.10 629.30 L1260.20 639.20" stroke="#3fd6f2" stroke-width="3"/></svg>
<div class="c" style="left:101px;top:42px;width:61px;height:16px;font-size:12px">CH 01</div>
<div class="c" style="left:110px;top:88px;width:40px;height:16px;font-size:13px">-<span style="font-size:17px;line-height:10px;position:relative;top:1px">&#8734;</span></div>
<div class="c" style="left:101px;top:102px;width:61px;height:16px;font-size:12px">CH 01</div>
<div class="c" style="left:110px;top:148px;width:40px;height:16px;font-size:13px">-<span style="font-size:17px;line-height:10px;position:relative;top:1px">&#8734;</span></div>
<div class="c" style="left:101px;top:161px;width:61px;height:16px;font-size:12px">CH 01</div>
<div class="c" style="left:110px;top:207px;width:40px;height:16px;font-size:13px">-<span style="font-size:17px;line-height:10px;position:relative;top:1px">&#8734;</span></div>
<div class="c" style="left:101px;top:221px;width:61px;height:16px;font-size:12px">CH 01</div>
<div class="c" style="left:110px;top:267px;width:40px;height:16px;font-size:13px">-<span style="font-size:17px;line-height:10px;position:relative;top:1px">&#8734;</span></div>
<div class="c" style="left:101px;top:280px;width:61px;height:16px;font-size:12px">CH 01</div>
<div class="c" style="left:110px;top:326px;width:40px;height:16px;font-size:13px">-<span style="font-size:17px;line-height:10px;position:relative;top:1px">&#8734;</span></div>
<div class="c" style="left:101px;top:340px;width:61px;height:16px;font-size:12px">CH 01</div>
<div class="c" style="left:110px;top:386px;width:40px;height:16px;font-size:13px">-<span style="font-size:17px;line-height:10px;position:relative;top:1px">&#8734;</span></div>
<div class="c" style="left:101px;top:399px;width:61px;height:16px;font-size:12px">CH 01</div>
<div class="c" style="left:110px;top:445px;width:40px;height:16px;font-size:13px">-<span style="font-size:17px;line-height:10px;position:relative;top:1px">&#8734;</span></div>
<div class="c" style="left:101px;top:459px;width:61px;height:16px;font-size:12px">CH 01</div>
<div class="c" style="left:110px;top:505px;width:40px;height:16px;font-size:13px">-<span style="font-size:17px;line-height:10px;position:relative;top:1px">&#8734;</span></div>
<div class="c" style="left:101px;top:518px;width:61px;height:16px;font-size:12px">CH 01</div>
<div class="c" style="left:110px;top:564px;width:40px;height:16px;font-size:13px">-<span style="font-size:17px;line-height:10px;position:relative;top:1px">&#8734;</span></div>
<div class="c" style="left:101px;top:578px;width:61px;height:16px;font-size:12px">CH 01</div>
<div class="c" style="left:110px;top:624px;width:40px;height:16px;font-size:13px">-<span style="font-size:17px;line-height:10px;position:relative;top:1px">&#8734;</span></div>
<div class="c" style="left:101px;top:638px;width:61px;height:16px;font-size:12px">CH 01</div>
<div class="c" style="left:110px;top:683px;width:40px;height:16px;font-size:13px">-<span style="font-size:17px;line-height:10px;position:relative;top:1px">&#8734;</span></div>
<div class="c" style="left:101px;top:697px;width:61px;height:16px;font-size:12px">CH 01</div>
<div class="c" style="left:110px;top:743px;width:40px;height:16px;font-size:13px">-<span style="font-size:17px;line-height:10px;position:relative;top:1px">&#8734;</span></div>
<div class="c" style="left:101px;top:757px;width:61px;height:16px;font-size:12px">CH 01</div>
<div class="c" style="left:110px;top:803px;width:40px;height:16px;font-size:13px">-<span style="font-size:17px;line-height:10px;position:relative;top:1px">&#8734;</span></div>
<div class="c" style="left:1100px;top:579px;width:80px;height:16px">Lo Cut</div>
<div class="c" style="left:1100px;top:641px;width:80px;height:16px">20 Hz</div>
<div class="c" style="left:1230px;top:580px;width:80px;height:16px;font-size:13.5px">HeadAmp</div>
<div class="c" style="left:1230px;top:659px;width:80px;height:16px;font-size:13.5px">-12.0 dB</div>
<div class="c" style="left:1230px;top:683px;width:80px;height:30px;padding-bottom:0">Main<br>On</div>
<div class="a gp" style="left:2px;top:45px;width:96.7px;height:56.6px;"></div>
<div class="a" style="left:79px;top:45.8px;width:5.2px;height:5.2px;border-radius:50%;background:#fff"></div>
<div class="a" style="left:85.7px;top:45.8px;width:5.2px;height:5.2px;border-radius:50%;background:#fff"></div>
<div class="a" style="left:92.4px;top:45.8px;width:5.2px;height:5.2px;border-radius:50%;background:#fff"></div>
<div class="a btn" style="left:4.8px;top:48.8px;width:90.5px;height:49px;background:#7a7a7a"></div>
<div class="c" style="left:6px;top:54px;width:90px;height:40px;color:#000;line-height:15px">MONO<br>SoF</div>
<div class="c" style="left:6px;top:65px;width:90px;height:16px;color:#eee">Mono EQ</div>
<div class="a gp" style="left:0px;top:103px;width:100px;height:59.7px;"></div>
<div class="a" style="left:80.7px;top:104.0px;width:4.8px;height:3px;border-radius:2.4px 2.4px 0 0;background:#fff"></div>
<div class="a" style="left:87.1px;top:104.0px;width:4.8px;height:3px;border-radius:2.4px 2.4px 0 0;background:#fff"></div>
<div class="a" style="left:93.9px;top:104.0px;width:4.8px;height:4.8px;border-radius:50%;background:#fff"></div>
<div class="a btn" style="left:4.8px;top:108.3px;width:90.5px;height:49px;background:#122656"></div>
<div class="c" style="left:6px;top:126px;width:90px;height:16px;color:#cfd2e0;font-size:12px">Mtx 1 EQ</div>
<div class="c" style="left:5px;top:126px;width:90px;height:16px;color:#cfd2e0;font-size:12px">Bus 1 EQ</div>
<div class="a gp" style="left:0px;top:162.6px;width:100px;height:59.7px;"></div>
<div class="a" style="left:80.7px;top:163.6px;width:4.8px;height:3px;border-radius:2.4px 2.4px 0 0;background:#fff"></div>
<div class="a" style="left:87.1px;top:163.6px;width:4.8px;height:3px;border-radius:2.4px 2.4px 0 0;background:#fff"></div>
<div class="a" style="left:93.9px;top:163.6px;width:4.8px;height:4.8px;border-radius:50%;background:#fff"></div>
<div class="a btn" style="left:4.8px;top:167.9px;width:90.5px;height:49px;background:#122656"></div>
<div class="c" style="left:6px;top:186px;width:90px;height:16px;color:#cfd2e0;font-size:12px">Mtx 2 EQ</div>
<div class="c" style="left:5px;top:186px;width:90px;height:16px;color:#cfd2e0;font-size:12px">Bus 2 EQ</div>
<div class="a gp" style="left:0px;top:222.2px;width:100px;height:59.7px;"></div>
<div class="a" style="left:80.7px;top:223.2px;width:4.8px;height:3px;border-radius:2.4px 2.4px 0 0;background:#fff"></div>
<div class="a" style="left:87.1px;top:223.2px;width:4.8px;height:3px;border-radius:2.4px 2.4px 0 0;background:#fff"></div>
<div class="a" style="left:93.9px;top:223.2px;width:4.8px;height:4.8px;border-radius:50%;background:#fff"></div>
<div class="a btn" style="left:4.8px;top:227.4px;width:90.5px;height:49px;background:#122656"></div>
<div class="c" style="left:6px;top:245px;width:90px;height:16px;color:#cfd2e0;font-size:12px">Mtx 3 EQ</div>
<div class="c" style="left:5px;top:245px;width:90px;height:16px;color:#cfd2e0;font-size:12px">Bus 3 EQ</div>
<div class="a gp" style="left:2px;top:283.1px;width:96.7px;height:56.6px;"></div>
<div class="a" style="left:79px;top:283.9px;width:5.2px;height:5.2px;border-radius:50%;background:#fff"></div>
<div class="a" style="left:85.7px;top:283.9px;width:5.2px;height:5.2px;border-radius:50%;background:#fff"></div>
<div class="a" style="left:92.4px;top:283.9px;width:5.2px;height:5.2px;border-radius:50%;background:#fff"></div>
<div class="a btn" style="left:4.8px;top:286.9px;width:90.5px;height:49px;background:#122656"></div>
<div class="c" style="left:6px;top:305px;width:90px;height:16px;color:#cfd2e0;font-size:12px">Mtx 4 EQ</div>
<div class="c" style="left:5px;top:305px;width:90px;height:16px;color:#cfd2e0;font-size:12px">Bus 4 EQ</div>
<div class="a gp" style="left:2px;top:342.6px;width:96.7px;height:56.6px;"></div>
<div class="a" style="left:79px;top:343.4px;width:5.2px;height:5.2px;border-radius:50%;background:#fff"></div>
<div class="a" style="left:85.7px;top:343.4px;width:5.2px;height:5.2px;border-radius:50%;background:#fff"></div>
<div class="a" style="left:92.4px;top:343.4px;width:5.2px;height:5.2px;border-radius:50%;background:#fff"></div>
<div class="a btn" style="left:4.8px;top:346.4px;width:90.5px;height:49px;background:#122656"></div>
<div class="c" style="left:6px;top:364px;width:90px;height:16px;color:#cfd2e0;font-size:12px">Mtx 5 EQ</div>
<div class="c" style="left:5px;top:364px;width:90px;height:16px;color:#cfd2e0;font-size:12px">Bus 5 EQ</div>
<div class="a gp" style="left:2px;top:402.2px;width:96.7px;height:56.6px;"></div>
<div class="a" style="left:79px;top:403.0px;width:5.2px;height:5.2px;border-radius:50%;background:#fff"></div>
<div class="a" style="left:85.7px;top:403.0px;width:5.2px;height:5.2px;border-radius:50%;background:#fff"></div>
<div class="a" style="left:92.4px;top:403.0px;width:5.2px;height:5.2px;border-radius:50%;background:#fff"></div>
<div class="a btn" style="left:4.8px;top:406px;width:90.5px;height:49px;background:#122656"></div>
<div class="c" style="left:6px;top:424px;width:90px;height:16px;color:#cfd2e0;font-size:12px">Mtx 6 EQ</div>
<div class="c" style="left:5px;top:424px;width:90px;height:16px;color:#cfd2e0;font-size:12px">Bus 6 EQ</div>
<div class="a gp" style="left:2px;top:461.7px;width:96.7px;height:56.6px;"></div>
<div class="a" style="left:79px;top:462.5px;width:5.2px;height:5.2px;border-radius:50%;background:#fff"></div>
<div class="a" style="left:85.7px;top:462.5px;width:5.2px;height:5.2px;border-radius:50%;background:#fff"></div>
<div class="a" style="left:92.4px;top:462.5px;width:5.2px;height:5.2px;border-radius:50%;background:#fff"></div>
<div class="a btn" style="left:4.8px;top:465.5px;width:90.5px;height:49px;background:#122656"></div>
<div class="c" style="left:6px;top:484px;width:90px;height:16px;color:#cfd2e0;font-size:12px">Mtx 7 EQ</div>
<div class="c" style="left:5px;top:484px;width:90px;height:16px;color:#cfd2e0;font-size:12px">Bus 7 EQ</div>
<div class="a gp" style="left:2px;top:521.2px;width:96.7px;height:56.6px;"></div>
<div class="a" style="left:79px;top:522.0px;width:5.2px;height:5.2px;border-radius:50%;background:#fff"></div>
<div class="a" style="left:85.7px;top:522.0px;width:5.2px;height:5.2px;border-radius:50%;background:#fff"></div>
<div class="a" style="left:92.4px;top:522.0px;width:5.2px;height:5.2px;border-radius:50%;background:#fff"></div>
<div class="a btn" style="left:4.8px;top:525px;width:90.5px;height:49px;background:#122656"></div>
<div class="c" style="left:6px;top:543px;width:90px;height:16px;color:#cfd2e0;font-size:12px">Mtx 8 EQ</div>
<div class="c" style="left:5px;top:543px;width:90px;height:16px;color:#cfd2e0;font-size:12px">Bus 8 EQ</div>
<div class="a gp" style="left:2px;top:580.8px;width:96.7px;height:56.6px;"></div>
<div class="a" style="left:79px;top:581.6px;width:5.2px;height:5.2px;border-radius:50%;background:#fff"></div>
<div class="a" style="left:85.7px;top:581.6px;width:5.2px;height:5.2px;border-radius:50%;background:#fff"></div>
<div class="a" style="left:92.4px;top:581.6px;width:5.2px;height:5.2px;border-radius:50%;background:#fff"></div>
<div class="a btn" style="left:4.8px;top:584.6px;width:90.5px;height:49px;background:#122656"></div>
<div class="c" style="left:6px;top:603px;width:90px;height:16px;color:#cfd2e0;font-size:12px">Mtx 9 EQ</div>
<div class="c" style="left:5px;top:603px;width:90px;height:16px;color:#cfd2e0;font-size:12px">Bus 9 EQ</div>
<div class="a gp" style="left:2px;top:640.3px;width:96.7px;height:56.6px;"></div>
<div class="a" style="left:79px;top:641.1px;width:5.2px;height:5.2px;border-radius:50%;background:#fff"></div>
<div class="a" style="left:85.7px;top:641.1px;width:5.2px;height:5.2px;border-radius:50%;background:#fff"></div>
<div class="a" style="left:92.4px;top:641.1px;width:5.2px;height:5.2px;border-radius:50%;background:#fff"></div>
<div class="a btn" style="left:4.8px;top:644.1px;width:90.5px;height:49px;background:#122656"></div>
<div class="c" style="left:6px;top:662px;width:90px;height:16px;color:#cfd2e0;font-size:12px">Mtx 10 EQ</div>
<div class="c" style="left:5px;top:662px;width:90px;height:16px;color:#cfd2e0;font-size:12px">Bus 10 EQ</div>
<div class="a gp" style="left:2px;top:699.8px;width:96.7px;height:56.6px;"></div>
<div class="a" style="left:79px;top:700.6px;width:5.2px;height:5.2px;border-radius:50%;background:#fff"></div>
<div class="a" style="left:85.7px;top:700.6px;width:5.2px;height:5.2px;border-radius:50%;background:#fff"></div>
<div class="a" style="left:92.4px;top:700.6px;width:5.2px;height:5.2px;border-radius:50%;background:#fff"></div>
<div class="a btn" style="left:4.8px;top:703.6px;width:90.5px;height:49px;background:#122656"></div>
<div class="c" style="left:6px;top:722px;width:90px;height:16px;color:#cfd2e0;font-size:12px">Mtx 11 EQ</div>
<div class="c" style="left:5px;top:722px;width:90px;height:16px;color:#cfd2e0;font-size:12px">Bus 11 EQ</div>
<div class="a gp" style="left:2px;top:759.4px;width:96.7px;height:56.6px;"></div>
<div class="a" style="left:79px;top:760.2px;width:5.2px;height:5.2px;border-radius:50%;background:#fff"></div>
<div class="a" style="left:85.7px;top:760.2px;width:5.2px;height:5.2px;border-radius:50%;background:#fff"></div>
<div class="a" style="left:92.4px;top:760.2px;width:5.2px;height:5.2px;border-radius:50%;background:#fff"></div>
<div class="a btn" style="left:4.8px;top:763.2px;width:90.5px;height:49px;background:#122656"></div>
<div class="c" style="left:6px;top:781px;width:90px;height:16px;color:#cfd2e0;font-size:12px">Mtx 12 EQ</div>
<div class="c" style="left:5px;top:781px;width:90px;height:16px;color:#cfd2e0;font-size:12px">Bus 12 EQ</div>
</div></body></html>
